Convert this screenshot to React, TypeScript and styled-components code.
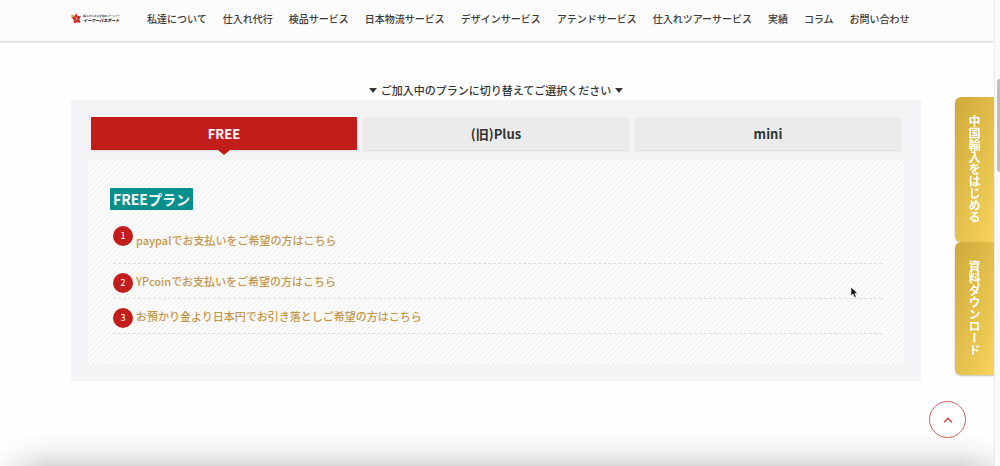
import React, { useState } from "react";
import styled, { createGlobalStyle } from "styled-components";

const GlobalStyle = createGlobalStyle`
  *, *::before, *::after { box-sizing: border-box; }
  body {
    margin: 0;
    background: #fefefe;
    color: #333;
    font-family: "Noto Sans CJK JP", "Noto Sans", sans-serif;
    overflow: hidden;
  }
`;

const Page = styled.div`
  min-height: 100vh;
  padding-right: 6px;
`;

const Header = styled.header`
  display: flex;
  align-items: center;
  gap: 26px;
  height: 41px;
  padding: 0 71px 3px 71px;
  background: #fcfcfc;
  box-shadow: 0 1px 2px rgba(0, 0, 0, 0.2);
`;

const LogoLink = styled.a`
  display: flex;
  flex: none;
`;

const Nav = styled.nav`
  display: flex;
  gap: 16px;
`;

const NavLink = styled.a`
  color: #3a3a3a;
  font-size: 10px;
  font-weight: 500;
  line-height: 16px;
  text-decoration: none;
  white-space: nowrap;
`;

const Main = styled.main`
  padding: 40px 73px 0 71px;
`;

const Caption = styled.p`
  display: flex;
  align-items: center;
  justify-content: center;
  gap: 4px;
  margin: 0;
  font-size: 11px;
  font-weight: 500;
  line-height: 19px;
`;

const Caret = styled.span`
  border: 4px solid transparent;
  border-top: 5px solid #333;
  border-bottom: 0;
`;

const Panel = styled.section`
  padding: 17px;
  background: #f4f4f6;
`;

const TabList = styled.div`
  display: grid;
  grid-template-columns: repeat(3, 1fr);
  gap: 6px;
  padding: 0 3px;
  margin-bottom: 10px;
`;

const Tab = styled.button<{ $active: boolean }>`
  position: relative;
  height: 33px;
  padding: 0;
  border: 0;
  border-radius: 1px;
  background: ${(p) => (p.$active ? "#c31d1b" : "#ebebeb")};
  color: ${(p) => (p.$active ? "#fff" : "#333")};
  font: bold 13px/20px "Noto Sans CJK JP", "Noto Sans", sans-serif;
  box-shadow: 0 1px 2px rgba(0, 0, 0, 0.1);
  cursor: pointer;

  &::after {
    content: "";
    display: ${(p) => (p.$active ? "block" : "none")};
    position: absolute;
    top: 100%;
    left: calc(50% - 6px);
    border: 6px solid transparent;
    border-top: 5px solid #c31d1b;
    border-bottom: 0;
  }
`;

const PlanBox = styled.div`
  padding: 28px 22px 30px;
  background: linear-gradient(135deg, #fdfdfd 25%, #f3f3f3 25% 50%, #fdfdfd 50% 75%, #f3f3f3 75%) 0 0 / 5px 5px;
`;

const PlanTitle = styled.h2`
  width: fit-content;
  margin: 0 0 10px;
  padding: 0 3px;
  border-radius: 1px;
  background: #058f8d;
  color: #fff;
  font-size: 14px;
  line-height: 22px;
`;

const PlanList = styled.ol`
  margin: 0 0 0 3px;
  padding: 0;
  list-style: none;
`;

const PlanItem = styled.li<{ $tall?: boolean }>`
  display: flex;
  align-items: ${(p) => (p.$tall ? "flex-start" : "flex-end")};
  gap: 3px;
  height: ${(p) => (p.$tall ? 44 : 35)}px;
  padding: ${(p) => (p.$tall ? "6px 0 0" : "0 0 5px")};
  border-bottom: 1px dashed #dfdfdf;
`;

const Badge = styled.span`
  flex: none;
  width: 20px;
  height: 20px;
  border-radius: 50%;
  background: #c31d1b;
  color: #fff;
  font-size: 9px;
  line-height: 20px;
  text-align: center;
`;

const PlanLink = styled.a<{ $tall?: boolean }>`
  padding: ${(p) => (p.$tall ? "4px 0 0" : "0 0 2px")};
  color: #c4964a;
  font-size: 11px;
  font-weight: 500;
  line-height: 20px;
  text-decoration: none;
`;

const SideLinks = styled.aside`
  position: fixed;
  top: 97px;
  right: 6px;
  display: flex;
  flex-direction: column;
`;

const SideLink = styled.a`
  width: 39px;
  padding: 18px 0 19px;
  border-radius: 6px 0 0 6px;
  background: linear-gradient(110deg, #cfaa3b, #f5d35c);
  box-shadow: 0 1px 2px rgba(0, 0, 0, 0.25);
  color: #fff;
  font-size: 12px;
  font-weight: bold;
  line-height: 39px;
  text-decoration: none;
  writing-mode: vertical-rl;
`;

const TopButton = styled.button`
  position: fixed;
  right: 34px;
  bottom: 28px;
  display: flex;
  align-items: center;
  justify-content: center;
  width: 37px;
  height: 37px;
  padding: 0;
  border: 1px solid #d0605c;
  border-radius: 50%;
  background: #fff;
  cursor: pointer;
`;

const BottomShade = styled.div`
  position: fixed;
  right: 0;
  bottom: 0;
  left: 0;
  height: 34px;
  background: linear-gradient(to bottom, rgba(0, 0, 0, 0), rgba(0, 0, 0, 0.04) 50%, rgba(0, 0, 0, 0.15));
  mask-image: linear-gradient(to right, rgba(0, 0, 0, 0.15), #000 50px, #000 calc(100% - 40px), rgba(0, 0, 0, 0.4));
  pointer-events: none;
`;

const ScrollTrack = styled.div`
  position: fixed;
  top: 0;
  right: 0;
  bottom: 0;
  width: 6px;
  padding: 79px 0 0 2px;
  border-left: 1px solid #ebebeb;
  background: #fafafa;
`;

const ScrollThumb = styled.div`
  height: 93px;
  border-radius: 3px 0 0 3px;
  background: #bdbdbd;
`;

const Pointer = styled.svg`
  position: fixed;
  top: 286px;
  left: 850px;
  pointer-events: none;
`;

const navItems = [
  "私達について",
  "仕入れ代行",
  "検品サービス",
  "日本物流サービス",
  "デザインサービス",
  "アテンドサービス",
  "仕入れツアーサービス",
  "実績",
  "コラム",
  "お問い合わせ",
];

const plans = ["FREE", "(旧)Plus", "mini"];

const payments = [
  "paypalでお支払いをご希望の方はこちら",
  "YPcoinでお支払いをご希望の方はこちら",
  "お預かり金より日本円でお引き落としご希望の方はこちら",
];

function Logo() {
  return (
    <svg width="50" height="14" viewBox="0 0 150 42" role="img" aria-label="イーウーパスポート">
      <path d="M15 4 20 12 30 13 25 22 29 32 18 31 9 34 8 23 0 15 11 13z" fill="#cb2325" />
      <path d="M0 10 9 8 11 13 4 18z" fill="#cfa143" />
      <path d="M13 15 20 25M19 14 14 26" stroke="#f3c9b5" strokeWidth="2" />
      <text x="37" y="15" fontSize="8" fontWeight="bold" fill="#444" fontFamily="Noto Sans CJK JP, sans-serif">
        輸入ビジネス最強のパートナー
      </text>
      <text x="37" y="30" fontSize="12" fontWeight="900" fontStyle="italic" fill="#111" fontFamily="Noto Sans CJK JP, sans-serif">
        イーウーパスポート
      </text>
    </svg>
  );
}

export default function App() {
  const [active, setActive] = useState(0);
  return (
    <Page>
      <GlobalStyle />
      <Header>
        <LogoLink href="#">
          <Logo />
        </LogoLink>
        <Nav>
          {navItems.map((item) => (
            <NavLink key={item} href="#">
              {item}
            </NavLink>
          ))}
        </Nav>
      </Header>
      <Main>
        <Caption>
          <Caret />
          ご加入中のプランに切り替えてご選択ください
          <Caret />
        </Caption>
        <Panel>
          <TabList role="tablist">
            {plans.map((plan, i) => (
              <Tab key={plan} role="tab" aria-selected={i === active} $active={i === active} onClick={() => setActive(i)}>
                {plan}
              </Tab>
            ))}
          </TabList>
          <PlanBox role="tabpanel">
            <PlanTitle>{plans[active]}プラン</PlanTitle>
            <PlanList>
              {payments.map((text, i) => (
                <PlanItem key={text} $tall={i === 0}>
                  <Badge>{i + 1}</Badge>
                  <PlanLink href="#" $tall={i === 0}>
                    {text}
                  </PlanLink>
                </PlanItem>
              ))}
            </PlanList>
          </PlanBox>
        </Panel>
      </Main>
      <SideLinks>
        <SideLink href="#">中国輸入をはじめる</SideLink>
        <SideLink href="#">資料ダウンロード</SideLink>
      </SideLinks>
      <TopButton aria-label="ページの先頭へ">
        <svg width="10" height="6" viewBox="0 0 10 6" fill="none" stroke="#cb4a46" strokeWidth="1.5">
          <path d="M1 5.2 5 1.2 9 5.2" />
        </svg>
      </TopButton>
      <BottomShade />
      <ScrollTrack>
        <ScrollThumb />
      </ScrollTrack>
      <Pointer width="9" height="13" viewBox="0 0 9 13">
        <path d="M1 1v9l2-2 1.6 3.6 1.6-.8L4.8 7.4H7.6z" fill="#111" stroke="#fff" strokeWidth=".6" />
      </Pointer>
    </Page>
  );
}
